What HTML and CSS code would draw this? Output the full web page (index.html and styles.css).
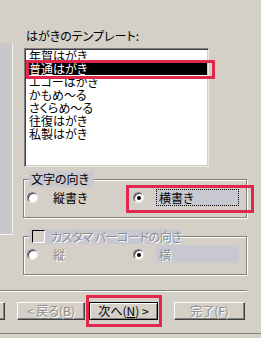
FILE: index.html
```html
<!DOCTYPE html>
<html lang="ja">
<head>
    <meta charset="UTF-8">
    <title>はがきのテンプレート</title>
    <link rel="stylesheet" href="styles.css">
</head>
<body>
    <div class="wizard">
        <div class="main">
            <div class="side"></div>
            <div class="content">
                <div class="caption">はがきのテンプレート:</div>
                <div class="listbox">
                    <ul class="items">
                        <li>年賀はがき</li>
                        <li class="selected">普通はがき</li>
                        <li>エコーはがき</li>
                        <li>かもめ〜る</li>
                        <li>さくらめ〜る</li>
                        <li>往復はがき</li>
                        <li>私製はがき</li>
                    </ul>
                </div>
                <fieldset class="group">
                    <legend class="legend">文字の向き</legend>
                    <div class="options">
                        <label class="opt"><span class="radio"></span><span class="opt-text">縦書き</span></label>
                        <label class="opt"><span class="radio checked"></span><span class="opt-text shaded focus">横書き</span></label>
                    </div>
                </fieldset>
                <fieldset class="group disabled">
                    <legend class="legend legend-check"><span class="checkbox"></span><span class="dim">カスタマ バーコードの向き</span></legend>
                    <div class="options">
                        <label class="opt"><span class="radio"></span><span class="opt-text dim">縦</span></label>
                        <label class="opt"><span class="radio checked"></span><span class="opt-text shaded dim">横</span></label>
                    </div>
                </fieldset>
            </div>
        </div>
        <div class="separator"></div>
        <div class="buttons">
            <button class="button partial"></button>
            <button class="button back" disabled>&lt; 戻る(B)</button>
            <button class="button next default">次へ(<u>N</u>) &gt;</button>
            <button class="button finish" disabled>完了(F)</button>
        </div>
        <div class="bottom-edge"></div>
    </div>

    <div class="mark mark-list"></div>
    <div class="mark mark-radio"></div>
    <div class="mark mark-next"></div>
</body>
</html>
```

FILE: styles.css
```css
body {
    margin: 0;
    padding: 0;
    background: #d4d0c8;
    font-family: "Noto Sans CJK JP", "Noto Sans", sans-serif;
    font-size: 12px;
    line-height: 13px;
    color: #000;
    width: 261px;
    height: 338px;
    overflow: hidden;
    position: relative;
    font-feature-settings: "palt";
}
.wizard {
    display: flex;
    flex-direction: column;
    height: 338px;
}
.main {
    display: flex;
    height: 290px;
    width: 247px;
}
.side {
    width: 16px;
    height: 191px;
    margin-top: 43px;
    background: #c8c8cc;
    border-right: 1px solid #f4f4f4;
    border-bottom: 1px solid #f4f4f4;
}
.content {
    margin-left: 10px;
    width: 226px;
}
.caption {
    margin-top: 29px;
    height: 13px;
    padding-left: 3px;
    margin-bottom: 6px;
}
.listbox {
    margin-left: 1px;
    width: 181px;
    height: 115px;
    background: #fff;
    border: 1px solid;
    border-color: #808080 #e8e8e8 #e8e8e8 #808080;
    box-shadow: inset 1px 1px 0 #404040, inset -1px -1px 0 #d4d0c8;
    padding: 1px;
    overflow: hidden;
}
.items {
    list-style: none;
    margin: -1px 0 0 0;
    padding: 0;
}
.items li {
    height: 13px;
    line-height: 13px;
    padding-left: 3px;
    white-space: nowrap;
}
.items li.selected {
    background: #000;
    color: #fff;
}
.group {
    margin: 4px 0 0 0;
    padding: 0 0 11px 0;
    width: 222px;
    border: 1px solid #808080;
    box-shadow: inset 1px 1px 0 #fff, 1px 1px 0 #fff;
    min-width: 0;
}
.group.disabled {
    margin-top: 11px;
}
.legend {
    margin-left: 5px;
    padding: 0 2px;
    width: 61px;
    height: 16px;
    line-height: 16px;
    background: #c8c8d0;
    white-space: nowrap;
}
.legend-check {
    width: 148px;
    height: 15px;
    line-height: 15px;
    display: flex;
    align-items: center;
    padding: 0 1px 0 3px;
    letter-spacing: -0.4px;
    overflow: hidden;
}
.checkbox {
    width: 11px;
    height: 11px;
    border: 1px solid;
    border-color: #000 #fff #fff #000;
    margin-right: 6px;
    background: #d4d0c8;
    flex: none;
}
.options {
    display: flex;
    margin-top: 2px;
    height: 17px;
    padding-left: 3px;
}
.disabled .options {
    margin-top: 1px;
    height: 18px;
}
.opt {
    display: flex;
    align-items: center;
    width: 106px;
}
.radio {
    width: 9px;
    height: 9px;
    border-radius: 50%;
    background: #fff;
    border: 1px solid;
    border-color: #808080 #e8e8e8 #e8e8e8 #808080;
    box-shadow: inset 1px 1px 0 #404040;
    margin-right: 12px;
    position: relative;
    flex: none;
}
.radio.checked:after {
    content: "";
    position: absolute;
    left: 3px;
    top: 3px;
    width: 4px;
    height: 4px;
    border-radius: 50%;
    background: #000;
}
.opt-text {
    padding-left: 3px;
    width: 89px;
    height: 100%;
    display: flex;
    align-items: center;
    box-sizing: border-box;
}
.opt-text.shaded {
    background: #c8c8d0;
}
.opt-text.focus {
    border: 1px dotted #000;
    padding-left: 2px;
}
.dim {
    color: #8c8c8c;
    text-shadow: 1px 1px 0 #fff;
}
.separator {
    width: 247px;
    height: 1px;
    background: #808080;
    border-bottom: 1px solid #fff;
}
.buttons {
    display: flex;
    margin-top: 10px;
    height: 18px;
}
.button {
    height: 18px;
    padding: 0;
    font-family: inherit;
    font-size: 12px;
    line-height: 14px;
    background: #d4d0c8;
    color: #000;
    border: 1px solid;
    border-color: #fff #404040 #404040 #fff;
    box-shadow: inset -1px -1px 0 #808080;
    box-sizing: border-box;
    font-feature-settings: "palt";
}
.button:disabled {
    color: #8c8c8c;
    text-shadow: 1px 1px 0 #fff;
}
.button.default {
    border-color: #000;
    box-shadow: inset 1px 1px 0 #fff, inset -1px -1px 0 #808080;
}
.partial {
    margin-left: -60px;
    width: 65px;
}
.back {
    margin-left: 12px;
    width: 68px;
}
.next {
    margin-left: 4px;
    width: 69px;
}
.finish {
    margin-left: 16px;
    width: 71px;
}
.bottom-edge {
    margin-top: 13px;
    height: 1px;
    background: #808080;
}
.mark {
    position: absolute;
    border: 3px solid #e0284c;
    box-sizing: border-box;
}
.mark-list {
    left: 26px;
    top: 60px;
    width: 189px;
    height: 19px;
}
.mark-radio {
    left: 126px;
    top: 185px;
    width: 128px;
    height: 28px;
}
.mark-next {
    left: 86px;
    top: 295px;
    width: 76px;
    height: 32px;
}
```
